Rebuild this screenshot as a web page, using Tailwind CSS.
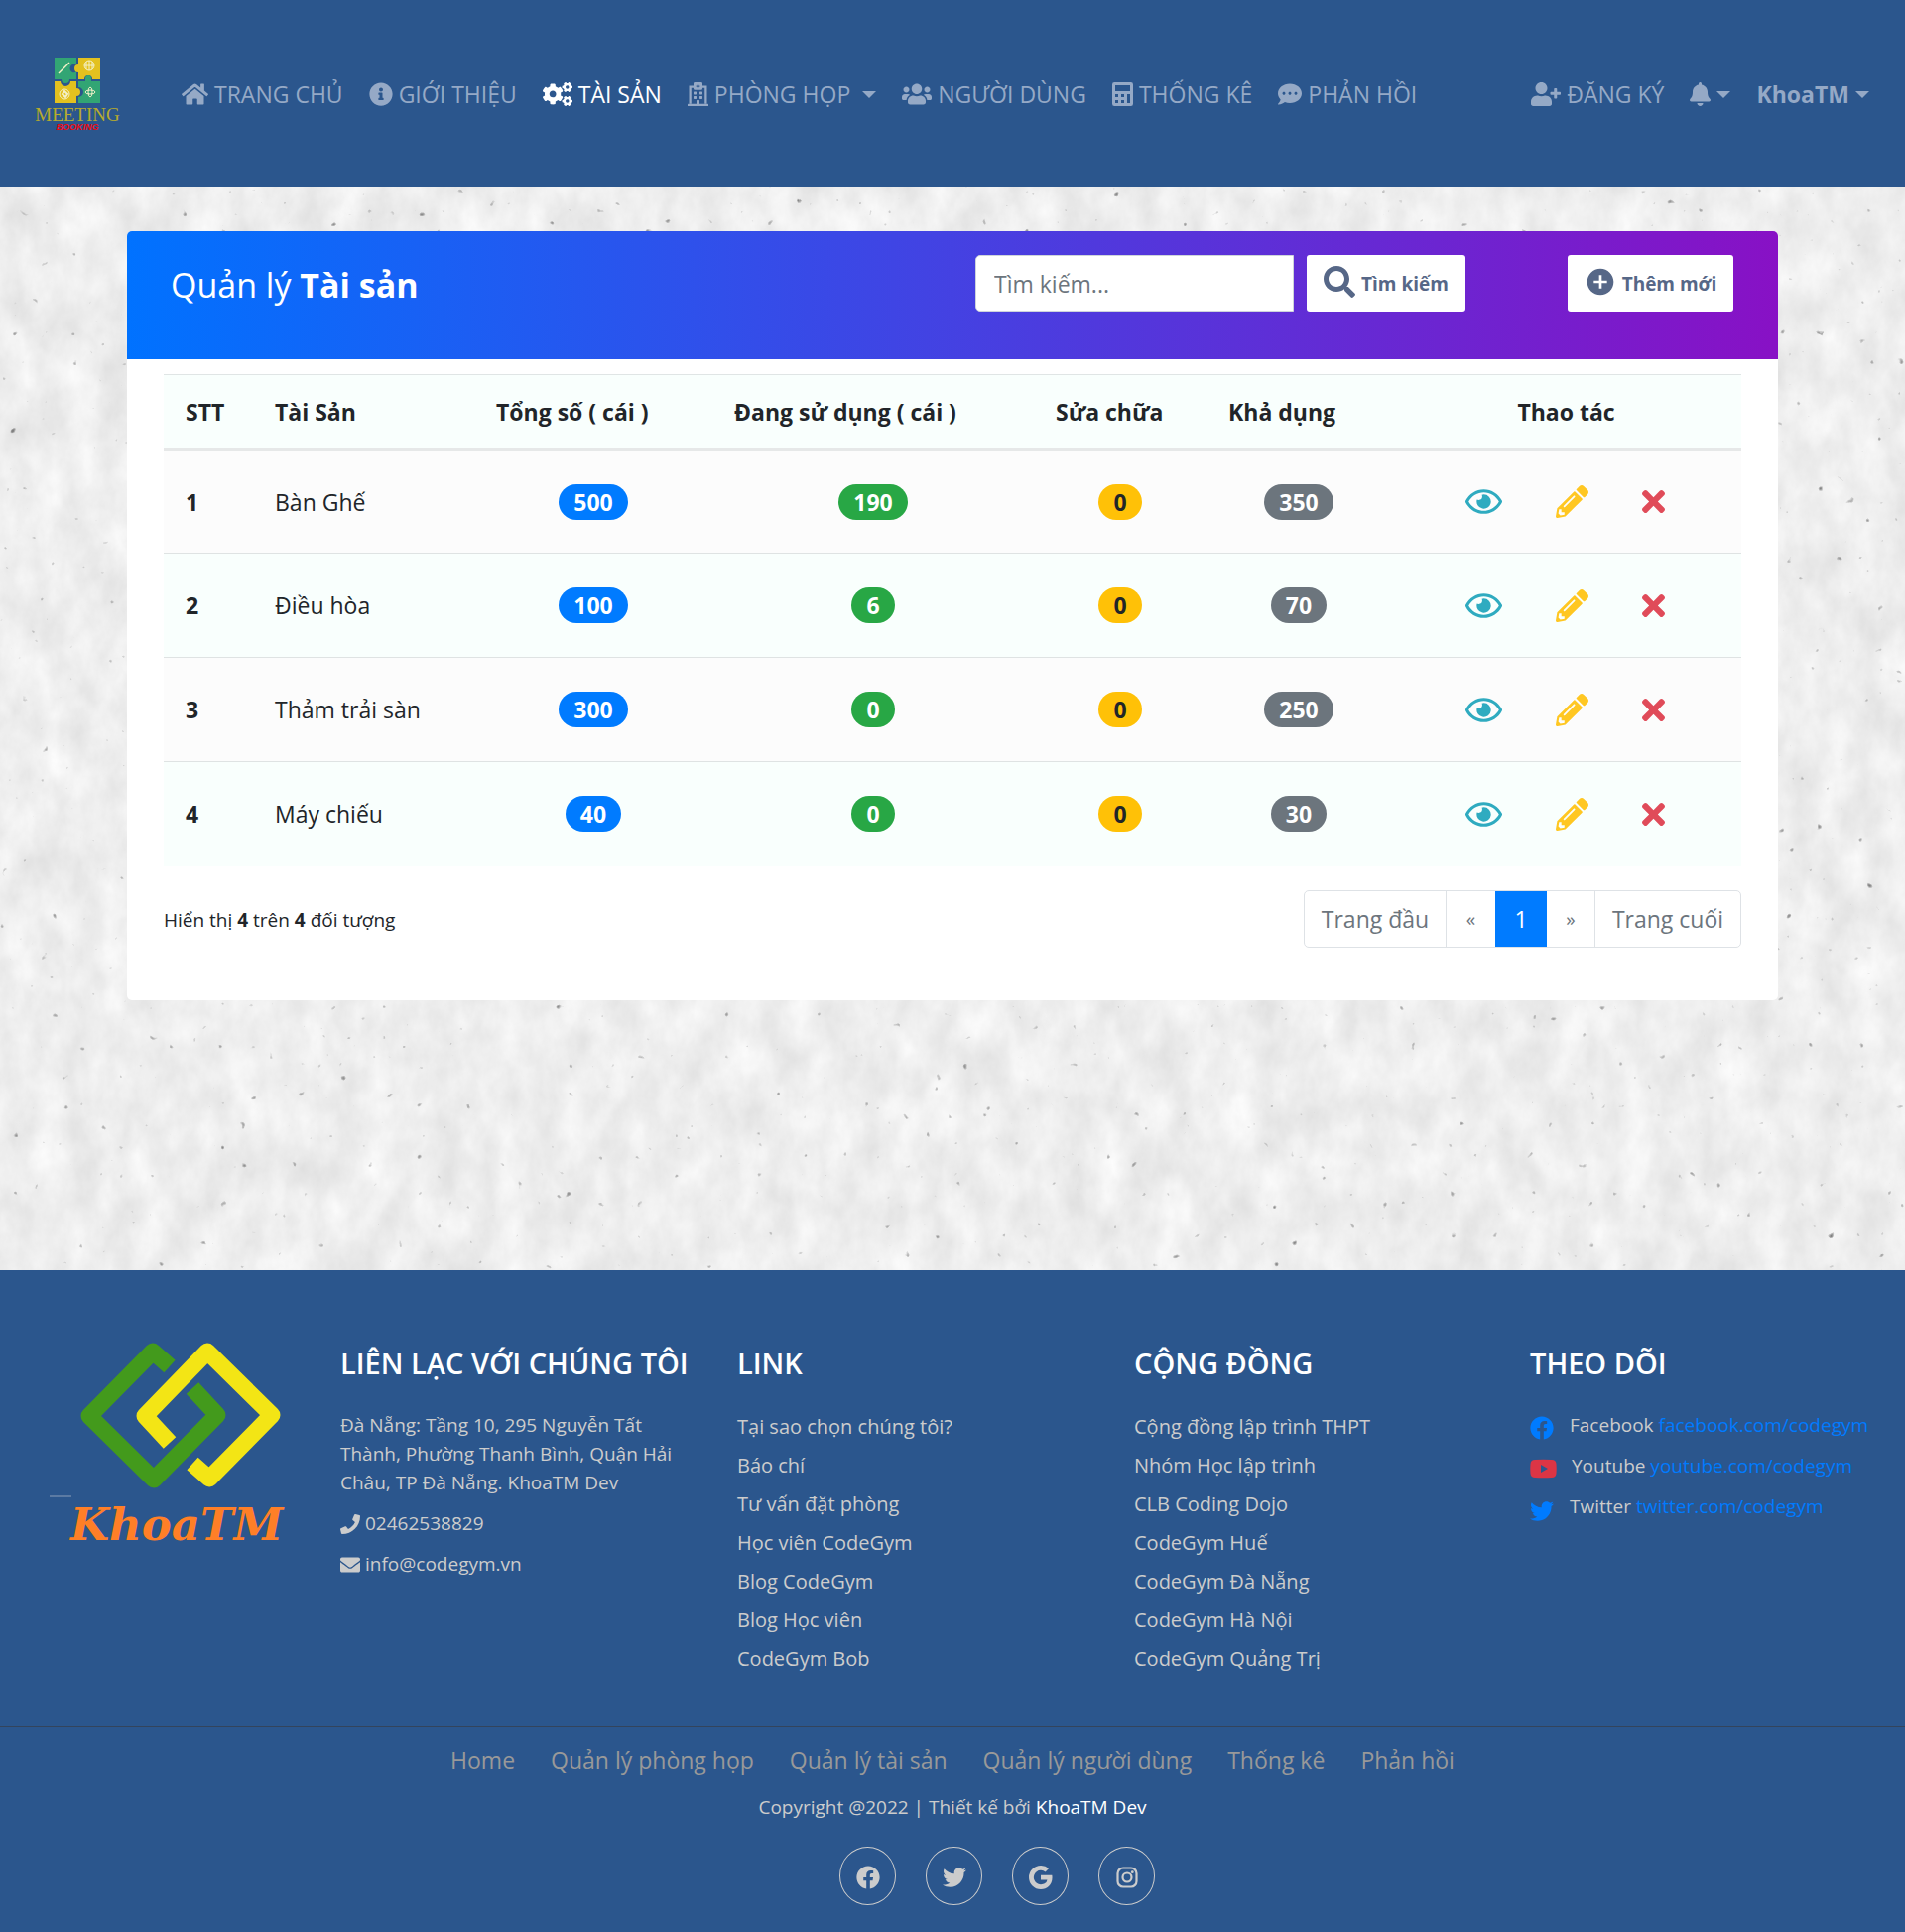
<!DOCTYPE html>
<html lang="vi">
<head>
<meta charset="utf-8">
<meta name="viewport" content="width=device-width, initial-scale=1">
<title>Quản lý Tài sản</title>
<script src="https://cdn.jsdelivr.net/npm/@tailwindcss/browser@4"></script>
</head>
<body class="relative min-h-screen flex flex-col bg-[#eeeeee] font-['Open_Sans','Noto_Sans',sans-serif] text-[23px] leading-[36px] text-[#212529]">

<svg class="hidden" aria-hidden="true">
  <symbol id="home" viewBox="0 0 576 512"><path d="M280.37 148.26L96 300.11V464a16 16 0 0 0 16 16l112.06-.29a16 16 0 0 0 15.92-16V368a16 16 0 0 1 16-16h64a16 16 0 0 1 16 16v95.64a16 16 0 0 0 16 16.05L464 480a16 16 0 0 0 16-16V300L295.67 148.26a12.19 12.19 0 0 0-15.3 0zM571.6 251.47L488 182.56V44.05a12 12 0 0 0-12-12h-56a12 12 0 0 0-12 12v72.61L318.47 43a48 48 0 0 0-61 0L4.34 251.47a12 12 0 0 0-1.6 16.9l25.5 31A12 12 0 0 0 45.15 301l235.22-193.74a12.19 12.19 0 0 1 15.3 0L530.9 301a12 12 0 0 0 16.9-1.6l25.5-31a12 12 0 0 0-1.7-16.93z"/></symbol>
  <symbol id="info" viewBox="0 0 512 512"><path d="M256 8C119.043 8 8 119.083 8 256c0 136.997 111.043 248 248 248s248-111.003 248-248C504 119.083 392.957 8 256 8zm0 110c23.196 0 42 18.804 42 42s-18.804 42-42 42-42-18.804-42-42 18.804-42 42-42zm56 254c0 6.627-5.373 12-12 12h-88c-6.627 0-12-5.373-12-12v-24c0-6.627 5.373-12 12-12h12v-64h-12c-6.627 0-12-5.373-12-12v-24c0-6.627 5.373-12 12-12h64c6.627 0 12 5.373 12 12v100h12c6.627 0 12 5.373 12 12v24z"/></symbol>
  <symbol id="cogs" viewBox="0 0 640 512">
    <path id="small-cog" d="M512.1 191l-8.2 14.3c-3 5.3-9.4 7.5-15.1 5.4-11.8-4.4-22.6-10.7-32.1-18.6-4.6-3.8-5.8-10.5-2.8-15.7l8.2-14.3c-6.9-8-12.3-17.3-15.9-27.4h-16.5c-6 0-11.2-4.3-12.2-10.3-2-12-2.1-24.6 0-37.1 1-6 6.2-10.4 12.2-10.4h16.5c3.6-10.1 9-19.4 15.9-27.4l-8.2-14.3c-3-5.2-1.9-11.9 2.8-15.7 9.5-7.9 20.4-14.2 32.1-18.6 5.7-2.1 12.1.1 15.1 5.4l8.2 14.3c10.5-1.9 21.2-1.9 31.7 0L552 6.3c3-5.3 9.4-7.5 15.1-5.4 11.8 4.4 22.6 10.7 32.1 18.6 4.6 3.8 5.8 10.5 2.8 15.7l-8.2 14.3c6.9 8 12.3 17.3 15.9 27.4h16.5c6 0 11.2 4.3 12.2 10.3 2 12 2.1 24.6 0 37.1-1 6-6.2 10.4-12.2 10.4h-16.5c-3.6 10.1-9 19.4-15.9 27.4l8.2 14.3c3 5.2 1.9 11.9-2.8 15.7-9.5 7.9-20.4 14.2-32.1 18.6-5.7 2.1-12.1-.1-15.1-5.4l-8.2-14.3c-10.4 1.9-21.2 1.9-31.7 0zm-10.5-58.8c38.5 29.6 82.4-14.3 52.8-52.8-38.5-29.7-82.4 14.3-52.8 52.8z"/>
    <use href="#small-cog" y="300"/>
    <path d="M386.3 286.1l33.7 16.8c10.1 5.8 14.5 18.1 10.5 29.1-8.9 24.2-26.4 46.4-42.6 65.8-7.4 8.9-20.2 11.1-30.3 5.3l-29.1-16.8c-16 13.7-34.6 24.6-54.9 31.7v33.6c0 11.6-8.3 21.6-19.7 23.6-24.6 4.2-50.4 4.4-75.9 0-11.5-2-20-11.9-20-23.6V418c-20.3-7.2-38.9-18-54.9-31.7L74 403c-10 5.8-22.9 3.6-30.3-5.3-16.2-19.4-33.3-41.6-42.2-65.7-4-10.9.4-23.2 10.5-29.1l33.3-16.8c-3.9-20.9-3.9-42.4 0-63.4L12 205.8c-10.1-5.8-14.6-18.1-10.5-29 8.9-24.2 26-46.4 42.2-65.8 7.4-8.9 20.2-11.1 30.3-5.3l29.1 16.8c16-13.7 34.6-24.6 54.9-31.7V57.1c0-11.5 8.2-21.5 19.6-23.5 24.6-4.2 50.5-4.4 76-.1 11.5 2 20 11.9 20 23.6v33.6c20.3 7.2 38.9 18 54.9 31.7l29.1-16.8c10-5.8 22.9-3.6 30.3 5.3 16.2 19.4 33.2 41.6 42.1 65.8 4 10.9.1 23.2-10 29.1l-33.7 16.8c3.9 21 3.9 42.5 0 63.5zm-117.6 21.1c59.2-77-28.7-164.9-105.7-105.7-59.2 77 28.7 164.9 105.7 105.7z"/>
  </symbol>
  <symbol id="hospital" viewBox="0 0 448 512">
    <path d="M56 464V100h72M392 464V100h-72" fill="none" stroke="currentColor" stroke-width="48"/>
    <path d="M0 476q0-12 12-12h424q12 0 12 12v36H0zM192 464v-70q0-10 10-10h44q10 0 10 10v70zM128 212q0-12 12-12h40q12 0 12 12v40q0 12-12 12h-40q-12 0-12-12zM256 212q0-12 12-12h40q12 0 12 12v40q0 12-12 12h-40q-12 0-12-12zM128 308q0-12 12-12h40q12 0 12 12v40q0 12-12 12h-40q-12 0-12-12zM256 308q0-12 12-12h40q12 0 12 12v40q0 12-12 12h-40q-12 0-12-12z"/>
    <path fill-rule="evenodd" d="M128 28q0-28 28-28h136q28 0 28 28v108q0 28-28 28H156q-28 0-28-28zM210 46v26h-26v28h26v26h28v-26h26V72h-26V46z"/>
  </symbol>
  <symbol id="users" viewBox="0 0 640 512"><path d="M96 224c35.3 0 64-28.7 64-64s-28.7-64-64-64-64 28.7-64 64 28.7 64 64 64zm448 0c35.3 0 64-28.7 64-64s-28.7-64-64-64-64 28.7-64 64 28.7 64 64 64zm32 32h-64c-17.6 0-33.5 7.1-45.1 18.6 40.3 22.1 68.9 62 75.1 109.4h66c17.7 0 32-14.3 32-32v-32c0-35.3-28.7-64-64-64zm-256 0c61.9 0 112-50.1 112-112S381.9 32 320 32 208 82.1 208 144s50.1 112 112 112zm76.8 32h-8.3c-20.8 10-43.9 16-68.5 16s-47.6-6-68.5-16h-8.3C179.6 288 128 339.6 128 403.2V432c0 26.5 21.5 48 48 48h288c26.5 0 48-21.5 48-48v-28.8c0-63.6-51.6-115.2-115.2-115.2zm-223.7-13.4C161.5 263.1 145.6 256 128 256H64c-35.3 0-64 28.7-64 64v32c0 17.7 14.3 32 32 32h65.9c6.3-47.4 34.9-87.3 75.2-109.4z"/></symbol>
  <symbol id="calculator" viewBox="0 0 448 512"><path fill-rule="evenodd" d="M48 0h352q48 0 48 48v416q0 48-48 48H48q-48 0-48-48V48Q0 0 48 0zM64 64v128h320V64zM64 256v64h64v-64zM192 256v64h64v-64zM320 256v192h64V256zM64 384v64h64v-64zM192 384v64h64v-64z"/></symbol>
  <symbol id="comment" viewBox="0 0 512 512"><path d="M256 32C114.6 32 0 125.1 0 240c0 49.6 21.4 95 57 130.7C44.5 421.1 2.7 466 2.2 466.5c-2.2 2.3-2.8 5.7-1.5 8.7S4.8 480 8 480c66.3 0 116-31.8 140.6-51.4 32.7 12.3 69 19.4 107.4 19.4 141.4 0 256-93.1 256-208S397.4 32 256 32zM128 272c-17.7 0-32-14.3-32-32s14.3-32 32-32 32 14.3 32 32-14.3 32-32 32zm128 0c-17.7 0-32-14.3-32-32s14.3-32 32-32 32 14.3 32 32-14.3 32-32 32zm128 0c-17.7 0-32-14.3-32-32s14.3-32 32-32 32 14.3 32 32-14.3 32-32 32z"/></symbol>
  <symbol id="user-plus" viewBox="0 0 640 512"><path d="M624 208h-64v-64c0-8.8-7.2-16-16-16h-32c-8.8 0-16 7.2-16 16v64h-64c-8.8 0-16 7.2-16 16v32c0 8.8 7.2 16 16 16h64v64c0 8.8 7.2 16 16 16h32c8.8 0 16-7.2 16-16v-64h64c8.8 0 16-7.2 16-16v-32c0-8.8-7.2-16-16-16zm-400 48c70.7 0 128-57.3 128-128S294.7 0 224 0 96 57.3 96 128s57.3 128 128 128zm89.6 32h-16.7c-22.2 10.2-46.9 16-72.9 16s-50.6-5.8-72.9-16h-16.7C60.2 288 0 348.2 0 422.4V464c0 26.5 21.5 48 48 48h352c26.5 0 48-21.5 48-48v-41.6c0-74.2-60.2-134.4-134.4-134.4z"/></symbol>
  <symbol id="bell" viewBox="0 0 448 512"><path d="M224 512c35.32 0 63.97-28.65 63.97-64H160.03c0 35.35 28.65 64 63.97 64zm215.39-149.71c-19.32-20.76-55.47-51.99-55.47-154.29 0-77.7-54.48-139.9-127.94-155.16V32c0-17.67-14.32-32-31.98-32s-31.98 14.33-31.98 32v20.84C118.56 68.1 64.08 130.3 64.08 208c0 102.3-36.15 133.53-55.47 154.29-6 6.45-8.66 14.16-8.61 21.71.11 16.4 12.98 32 32.1 32h383.8c19.12 0 32-15.6 32.1-32 .05-7.55-2.61-15.27-8.61-21.71z"/></symbol>
  <symbol id="caret" viewBox="0 0 14 7"><path d="M0 0h14L7 7z"/></symbol>
  <symbol id="search" viewBox="0 0 512 512"><path d="M505 442.7L405.3 343c-4.5-4.5-10.6-7-17-7H372c27.6-35.3 44-79.7 44-128C416 93.1 322.9 0 208 0S0 93.1 0 208s93.1 208 208 208c48.3 0 92.7-16.4 128-44v16.3c0 6.4 2.5 12.5 7 17l99.7 99.7c9.4 9.4 24.6 9.4 33.9 0l28.3-28.3c9.4-9.4 9.4-24.6.1-34zM208 336c-70.7 0-128-57.2-128-128 0-70.7 57.2-128 128-128 70.7 0 128 57.2 128 128 0 70.7-57.2 128-128 128z"/></symbol>
  <symbol id="add" viewBox="0 0 24 24"><path d="M12 2C6.48 2 2 6.48 2 12s4.48 10 10 10 10-4.48 10-10S17.52 2 12 2zm5 11h-4v4h-2v-4H7v-2h4V7h2v4h4v2z"/></symbol>
  <symbol id="eye" viewBox="0 0 576 512"><path d="M288 144a110.94 110.94 0 0 0-31.24 5 55.4 55.4 0 0 1 7.24 27 56 56 0 0 1-56 56 55.4 55.4 0 0 1-27-7.24A111.71 111.71 0 1 0 288 144zm284.52 97.4C518.29 135.59 410.93 64 288 64S57.68 135.64 3.48 241.41a32.35 32.35 0 0 0 0 29.19C57.71 376.41 165.07 448 288 448s230.32-71.64 284.52-177.41a32.35 32.35 0 0 0 0-29.19zM288 400c-98.65 0-189.09-55-237.93-144C98.91 167 189.34 112 288 112s189.09 55 237.93 144C477.1 345 386.66 400 288 400z"/></symbol>
  <symbol id="pencil" viewBox="0 0 512 512"><path d="M497.9 142.1l-46.1 46.1c-4.7 4.7-12.3 4.7-17 0l-111-111c-4.7-4.7-4.7-12.3 0-17l46.1-46.1c18.7-18.7 49.1-18.7 67.9 0l60.1 60.1c18.8 18.7 18.8 49.1 0 67.9zM284.2 99.8L21.6 362.4.4 483.9c-2.9 16.4 11.4 30.6 27.8 27.8l121.5-21.3 262.6-262.6c4.7-4.7 4.7-12.3 0-17l-111-111c-4.8-4.7-12.4-4.7-17.1 0zM124.1 339.9c-5.5-5.5-5.5-14.3 0-19.8l154-154c5.5-5.5 14.3-5.5 19.8 0s5.5 14.3 0 19.8l-154 154c-5.5 5.5-14.3 5.5-19.8 0zM88 424h48v36.3l-64.5 11.3-31.1-31.1L51.7 376H88v48z"/></symbol>
  <symbol id="times" viewBox="0 80 352 352"><path d="M242.72 256l100.07-100.07c12.28-12.28 12.28-32.19 0-44.48l-22.24-22.24c-12.28-12.28-32.19-12.28-44.48 0L176 189.28 75.93 89.21c-12.28-12.28-32.19-12.28-44.48 0L9.21 111.45c-12.28 12.28-12.28 32.19 0 44.48L109.28 256 9.21 356.07c-12.28 12.28-12.28 32.19 0 44.48l22.24 22.24c12.28 12.28 32.2 12.28 44.48 0L176 322.72l100.07 100.07c12.28 12.28 32.2 12.28 44.48 0l22.24-22.24c12.28-12.28 12.28-32.19 0-44.48L242.72 256z"/></symbol>
  <symbol id="phone" viewBox="0 0 512 512"><path d="M493.4 24.6l-104-24c-11.3-2.6-22.9 3.3-27.5 13.9l-48 112c-4.2 9.8-1.4 21.3 6.9 28l60.6 49.6c-36 76.7-98.9 140.5-177.2 177.2l-49.6-60.6c-6.8-8.3-18.2-11.1-28-6.9l-112 48C3.9 366.5-2 378.1.6 389.4l24 104C27.1 504.2 36.7 512 48 512c256.1 0 464-207.5 464-464 0-11.2-7.7-20.9-18.6-23.4z"/></symbol>
  <symbol id="envelope" viewBox="0 0 512 512"><path d="M502.3 190.8c3.9-3.1 9.7-.2 9.7 4.7V400c0 26.5-21.5 48-48 48H48c-26.5 0-48-21.5-48-48V195.6c0-5 5.7-7.8 9.7-4.7 22.4 17.4 52.1 39.5 154.1 113.6 21.1 15.4 56.7 47.8 92.2 47.6 35.7.3 72-32.8 92.3-47.6 102-74.1 131.6-96.3 154-113.7zM256 320c23.2.4 56.6-29.2 73.4-41.4 132.7-96.3 142.8-104.7 173.4-128.7 5.8-4.5 9.2-11.5 9.2-18.9v-19c0-26.5-21.5-48-48-48H48c-26.5 0-48 21.5-48 48v19c0 7.4 3.4 14.3 9.2 18.9 30.6 23.9 40.7 32.4 173.4 128.7 16.8 12.2 50.2 41.8 73.4 41.4z"/></symbol>
  <symbol id="facebook" viewBox="0 0 512 512"><path d="M504 256C504 119 393 8 256 8S8 119 8 256c0 123.78 90.69 226.38 209.25 245V327.69h-63V256h63v-54.64c0-62.15 37-96.48 93.67-96.48 27.14 0 55.52 4.84 55.52 4.84v61h-31.28c-30.8 0-40.41 19.12-40.41 38.73V256h68.78l-11 71.69h-57.78V501C413.31 482.38 504 379.78 504 256z"/></symbol>
  <symbol id="youtube" viewBox="0 0 27 24"><path fill-rule="evenodd" d="M5 3Q13.500 2.500 22 3q4 0 4.500 4 .5 5 0 10-.5 4-4.500 4Q13.500 21.500 5 21 1 21 .5 17 0 12 .5 7 1 3 5 3zM11 8v8l7-4z"/></symbol>
  <symbol id="twitter" viewBox="0 0 512 512"><path d="M459.37 151.716c.325 4.548.325 9.097.325 13.645 0 138.72-105.583 298.558-298.558 298.558-59.452 0-114.68-17.219-161.137-47.106 8.447.974 16.568 1.299 25.34 1.299 49.055 0 94.213-16.568 130.274-44.832-46.132-.975-84.792-31.188-98.112-72.772 6.498.974 12.995 1.624 19.818 1.624 9.421 0 18.843-1.3 27.614-3.573-48.081-9.747-84.143-51.98-84.143-102.985v-1.299c13.969 7.797 30.214 12.67 47.431 13.319-28.264-18.843-46.781-51.005-46.781-87.391 0-19.492 5.197-37.36 14.294-52.954 51.655 63.675 129.3 105.258 216.365 109.807-1.624-7.797-2.599-15.918-2.599-24.04 0-57.828 46.782-104.934 104.934-104.934 30.213 0 57.502 12.67 76.67 33.137 23.715-4.548 46.456-13.32 66.599-25.34-7.798 24.366-24.366 44.833-46.132 57.827 21.117-2.273 41.584-8.122 60.426-16.243-14.292 20.791-32.161 39.308-52.628 54.253z"/></symbol>
  <symbol id="google" viewBox="0 0 16 16"><path d="M15.545 6.558a9.42 9.42 0 0 1 .139 1.626c0 2.434-.87 4.492-2.384 5.885h.002C11.978 15.292 10.158 16 8 16A8 8 0 1 1 8 0a7.689 7.689 0 0 1 5.352 2.082l-2.284 2.284A4.347 4.347 0 0 0 8 3.166c-2.087 0-3.86 1.408-4.492 3.304a4.792 4.792 0 0 0 0 3.063h.003c.635 1.893 2.405 3.301 4.492 3.301 1.078 0 2.004-.276 2.722-.764h-.003a3.702 3.702 0 0 0 1.599-2.431H8v-3.08h7.545z"/></symbol>
  <symbol id="instagram" viewBox="0 0 24 24"><g fill="none" stroke="currentColor" stroke-width="2.200"><rect x="2.500" y="2.500" width="19" height="19" rx="5.500"/><circle cx="12" cy="12" r="4.500"/></g><circle cx="17.300" cy="6.700" r="1.400"/></symbol>
</svg>

<!-- plaster wall behind the page -->
<svg class="absolute inset-0 -z-10 h-full w-full" aria-hidden="true">
  <filter id="plaster" x="0" y="0" width="100%" height="100%" color-interpolation-filters="sRGB">
    <feTurbulence type="fractalNoise" baseFrequency="0.03 0.02" numOctaves="5" seed="4"/>
    <feColorMatrix values="0.13 0 0 0 0.868  0.13 0 0 0 0.868  0.13 0 0 0 0.868  0 0 0 0 1"/>
  </filter>
  <filter id="specks" x="0" y="0" width="100%" height="100%" color-interpolation-filters="sRGB">
    <feTurbulence type="fractalNoise" baseFrequency="0.1" numOctaves="2" seed="11"/>
    <feColorMatrix values="0 0 0 0 0.5  0 0 0 0 0.5  0 0 0 0 0.5  7 0 0 0 -5.45"/>
  </filter>
  <rect width="100%" height="100%" filter="url(#plaster)"/>
  <rect width="100%" height="100%" filter="url(#specks)"/>
</svg>

<nav class="flex h-[188px] items-center bg-[#2b568d] pl-[34px] pr-9 pt-[2px] text-[#95a9c6]">
  <a href="#" class="mr-[61px] flex w-[88px] flex-col items-center">
    <svg class="h-[46px] w-[46px]" viewBox="0 0 46 46" aria-hidden="true">
      <path fill="#32a574" d="M0 0h22v7a4 4 0 0 0-4 8 4 4 0 0 0 4-1v8h-7a4 4 0 0 1-8 0H0z"/>
      <path fill="#e3c11f" d="M24 0h22v22h-8a4 4 0 0 0-8 0h-6v-7a4 4 0 1 1 0-8z"/>
      <path fill="#e3c11f" d="M0 24h6a5 5 0 0 0 10 0h6v7a4 4 0 1 1 0 8v7H0z"/>
      <path fill="#32a574" d="M24 24h7v-3a3 3 0 1 1 6 0v3h9v22H24v-6a5 5 0 0 0 0-10z"/>
      <g fill="none" stroke="#f4f1c9"><path stroke-width="1.500" d="M4 16L15 5"/><circle cx="35" cy="8" r="5"/><path d="M30 8h10M35 3v10M32 4v8M38 4v8"/><circle cx="10" cy="37" r="5"/><path stroke-width="2" d="M8 37l2-3 3 3-2 3z"/><ellipse cx="36" cy="35" rx="5" ry="2"/><ellipse cx="36" cy="35" rx="2" ry="5"/></g>
    </svg>
    <span class="mt-1 font-['Liberation_Serif',serif] text-[19px] leading-[16px] text-[#b7ab2c]">MEETING</span>
    <span class="font-['Liberation_Sans',sans-serif] text-[9px] font-bold italic leading-[8px] text-[#f00810]">BOOKING</span>
  </a>
  <ul class="flex flex-1 items-center gap-[26px] whitespace-nowrap">
    <li><a href="#" class="flex items-center gap-[6px]"><svg class="h-6 w-[27px] fill-current"><use href="#home"/></svg>TRANG CHỦ</a></li>
    <li><a href="#" class="flex items-center gap-[6px]"><svg class="size-6 fill-current"><use href="#info"/></svg>GIỚI THIỆU</a></li>
    <li><a href="#" class="flex items-center gap-[6px] text-white"><svg class="h-6 w-[30px] fill-current"><use href="#cogs"/></svg>TÀI SẢN</a></li>
    <li><a href="#" class="flex items-center gap-[6px]"><svg class="h-6 w-[21px] fill-current"><use href="#hospital"/></svg>PHÒNG HỌP<svg class="ml-[6px] h-[7px] w-[14px] fill-current"><use href="#caret"/></svg></a></li>
    <li><a href="#" class="flex items-center gap-[6px]"><svg class="h-6 w-[30px] fill-current"><use href="#users"/></svg>NGƯỜI DÙNG</a></li>
    <li><a href="#" class="flex items-center gap-[6px]"><svg class="h-6 w-[21px] fill-current"><use href="#calculator"/></svg>THỐNG KÊ</a></li>
    <li><a href="#" class="flex items-center gap-[6px]"><svg class="size-6 fill-current"><use href="#comment"/></svg>PHẢN HỒI</a></li>
  </ul>
  <ul class="flex items-center gap-[26px] whitespace-nowrap">
    <li><a href="#" class="flex items-center gap-[6px]"><svg class="h-6 w-[30px] fill-current"><use href="#user-plus"/></svg>ĐĂNG KÝ</a></li>
    <li><a href="#" aria-label="Thông báo" class="flex items-center gap-[6px]"><svg class="h-6 w-[21px] fill-current"><use href="#bell"/></svg><svg class="h-[7px] w-[14px] fill-current"><use href="#caret"/></svg></a></li>
    <li><a href="#" class="flex items-center gap-[6px] font-bold">KhoaTM<svg class="h-[7px] w-[14px] fill-current"><use href="#caret"/></svg></a></li>
  </ul>
</nav>

<main class="flex-1 px-32 pt-[45px] pb-[272px]">
  <section class="rounded-[5px] bg-white pb-[53px]">
    <header class="flex h-[129px] items-start rounded-t-[5px] bg-linear-to-r/srgb from-[#0072ff] to-[#8811c5] pl-11 pr-[45px] pt-6">
      <h2 class="flex-1 text-[34px] font-medium leading-[60px] text-white">Quản lý <b>Tài sản</b></h2>
      <form class="flex gap-[13px]">
        <input type="text" aria-label="Tìm kiếm" placeholder="Tìm kiếm..." class="h-[57px] w-[321px] rounded-l-[5px] border border-[#ced4da] bg-white px-[18px] text-[23px] placeholder:text-[#6c757d]">
        <button type="button" class="flex h-[57px] w-[160px] items-center justify-center gap-[6px] rounded-[3px] bg-white text-[19px] font-bold text-[#566787]"><svg class="mb-1 size-8 fill-current"><use href="#search"/></svg>Tìm kiếm</button>
      </form>
      <button type="button" class="ml-[103px] flex h-[57px] w-[167px] items-center justify-center gap-[6px] rounded-[3px] bg-white text-[19px] font-bold text-[#566787]"><svg class="mb-1 size-8 fill-current"><use href="#add"/></svg>Thêm mới</button>
    </header>

    <div class="px-[37px] pt-[15px]">
      <table class="w-full table-fixed border-collapse text-center">
        <colgroup><col class="w-[90px]"><col class="w-[223px]"><col class="w-[240px]"><col class="w-[324px]"><col class="w-[174px]"><col class="w-[186px]"><col></colgroup>
        <thead>
          <tr class="h-[75px] border-t border-b-3 border-t-[#e0e5e5] border-b-[#e6e8e8] bg-[#f9fffd] text-left font-bold">
            <th scope="col" class="pl-[22px]">STT</th><th scope="col" class="pl-[22px]">Tài Sản</th><th scope="col" class="pl-[22px]">Tổng số ( cái )</th><th scope="col" class="pl-[22px]">Đang sử dụng ( cái )</th><th scope="col" class="pl-[22px]">Sửa chữa</th><th scope="col" class="pl-[22px]">Khả dụng</th><th scope="col" class="text-center">Thao tác</th>
          </tr>
        </thead>
        <tbody id="rows"></tbody>
      </table>
      <div class="mt-6 flex items-center justify-between">
        <p class="pt-[2px] text-[19px]">Hiển thị <b>4</b> trên <b>4</b> đối tượng</p>
        <ul class="flex h-[58px] overflow-hidden rounded-[5px] border border-[#dee2e6] text-[#6c757d]">
          <li><a href="#" class="flex h-full w-[142px] items-center justify-center">Trang đầu</a></li>
          <li><a href="#" class="flex h-full w-[50px] items-center justify-center border-l border-[#dee2e6] text-[19px]">«</a></li>
          <li class="-my-px"><a href="#" aria-current="page" class="flex h-[58px] w-[52px] items-center justify-center bg-[#007bff] text-white">1</a></li>
          <li><a href="#" class="flex h-full w-[48px] items-center justify-center text-[19px]">»</a></li>
          <li><a href="#" class="flex h-full w-[147px] items-center justify-center border-l border-[#dee2e6]">Trang cuối</a></li>
        </ul>
      </div>
    </div>
  </section>
</main>

<footer class="bg-[#2b568d] text-[#cccccc]">
  <div class="grid h-[459px] grid-cols-[4fr_5fr_5fr_5fr_5fr] pt-[70px]">
    <div class="pl-[50px]">
      <svg class="h-[157px] w-[245px]" viewBox="50 1350 245 157" fill="none" stroke-width="17" stroke-linejoin="round" aria-hidden="true">
        <path stroke="#439a1c" d="M171 1377L154 1362 90 1427 155 1491 219 1426 194 1399"/>
        <path stroke="#f3e515" d="M171 1454L146 1427 209 1362 274 1426 211 1490 194 1475"/>
      </svg>
      <hr class="w-[22px] border-t-2 border-[#5b7aa3]">
      <p class="ml-[21px] mt-[2px] whitespace-nowrap font-['DejaVu_Serif',serif] text-[45px] font-bold italic leading-[52px] text-[#ff7f27]">KhoaTM</p>
    </div>
    <div class="px-[23px]">
      <h3 class="whitespace-nowrap text-[29px] font-semibold leading-[48px] text-white">LIÊN LẠC VỚI CHÚNG TÔI</h3>
      <p class="mt-6 text-[19px] leading-[29px]">Đà Nẵng: Tầng 10, 295 Nguyễn Tất Thành, Phường Thanh Bình, Quận Hải Châu, TP Đà Nẵng. KhoaTM Dev</p>
      <p class="mt-3 flex items-center gap-[5px] text-[19px] leading-[29px]"><svg class="size-5 fill-current"><use href="#phone"/></svg>02462538829</p>
      <p class="mt-3 flex items-center gap-[5px] text-[19px] leading-[29px]"><svg class="size-5 fill-current"><use href="#envelope"/></svg>info@codegym.vn</p>
    </div>
    <div class="px-[23px]">
      <h3 class="text-[29px] font-semibold leading-[48px] text-white">LINK</h3>
      <ul class="mt-5 text-[20px] leading-[39px]">
        <li><a href="#">Tại sao chọn chúng tôi?</a></li><li><a href="#">Báo chí</a></li><li><a href="#">Tư vấn đặt phòng</a></li><li><a href="#">Học viên CodeGym</a></li><li><a href="#">Blog CodeGym</a></li><li><a href="#">Blog Học viên</a></li><li><a href="#">CodeGym Bob</a></li>
      </ul>
    </div>
    <div class="px-[23px]">
      <h3 class="text-[29px] font-semibold leading-[48px] text-white">CỘNG ĐỒNG</h3>
      <ul class="mt-5 text-[20px] leading-[39px]">
        <li><a href="#">Cộng đồng lập trình THPT</a></li><li><a href="#">Nhóm Học lập trình</a></li><li><a href="#">CLB Coding Dojo</a></li><li><a href="#">CodeGym Huế</a></li><li><a href="#">CodeGym Đà Nẵng</a></li><li><a href="#">CodeGym Hà Nội</a></li><li><a href="#">CodeGym Quảng Trị</a></li>
      </ul>
    </div>
    <div class="pl-[22px]">
      <h3 class="text-[29px] font-semibold leading-[48px] text-white">THEO DÕI</h3>
      <ul class="mt-[18px] whitespace-nowrap text-[19px] leading-[41px] text-[#cccccc]">
        <li class="flex items-center"><svg class="mr-4 mt-1 size-6 fill-[#007bff]"><use href="#facebook"/></svg><span>Facebook <a href="#" class="text-[#007bff]">facebook.com/codegym</a></span></li>
        <li class="flex items-center"><svg class="mr-[15px] mt-1 h-6 w-[27px] fill-[#dc3545]"><use href="#youtube"/></svg><span>Youtube <a href="#" class="text-[#007bff]">youtube.com/codegym</a></span></li>
        <li class="flex items-center"><svg class="mr-4 mt-2 size-6 fill-[#007bff]"><use href="#twitter"/></svg><span>Twitter <a href="#" class="text-[#007bff]">twitter.com/codegym</a></span></li>
      </ul>
    </div>
  </div>
  <div class="flex flex-col items-center border-t border-[#33445c] pt-4 pb-[27px]">
    <ul class="flex gap-9 text-[#999999]">
      <li><a href="#">Home</a></li><li><a href="#">Quản lý phòng họp</a></li><li><a href="#">Quản lý tài sản</a></li><li><a href="#">Quản lý người dùng</a></li><li><a href="#">Thống kê</a></li><li><a href="#">Phản hồi</a></li>
    </ul>
    <p class="mt-[13px] text-[19px] leading-[32px]">Copyright @2022 | Thiết kế bởi <a href="#" class="text-white">KhoaTM Dev</a></p>
    <ul class="mt-6 flex gap-[30px] pl-[90px]">
      <li><a href="#" aria-label="Facebook" class="flex h-[59px] w-[57px] items-center justify-center rounded-[50%] border border-[#cccccc]"><svg class="mt-[2px] size-6 fill-current"><use href="#facebook"/></svg></a></li>
      <li><a href="#" aria-label="Twitter" class="flex h-[59px] w-[57px] items-center justify-center rounded-[50%] border border-[#cccccc]"><svg class="mt-[2px] size-6 fill-current"><use href="#twitter"/></svg></a></li>
      <li><a href="#" aria-label="Google" class="flex h-[59px] w-[57px] items-center justify-center rounded-[50%] border border-[#cccccc]"><svg class="mt-[2px] size-6 fill-current"><use href="#google"/></svg></a></li>
      <li><a href="#" aria-label="Instagram" class="flex h-[59px] w-[57px] items-center justify-center rounded-[50%] border border-[#cccccc]"><svg class="mt-[2px] size-6 fill-current"><use href="#instagram"/></svg></a></li>
    </ul>
  </div>
</footer>

<script>
  const assets = [
    ['Bàn Ghế', 500, 190, 0, 350],
    ['Điều hòa', 100, 6, 0, 70],
    ['Thảm trải sàn', 300, 0, 0, 250],
    ['Máy chiếu', 40, 0, 0, 30],
  ];
  const colors = ['bg-[#007bff] text-white', 'bg-[#28a745] text-white', 'bg-[#ffc107] text-[#212529]', 'bg-[#6c757d] text-white'];
  document.getElementById('rows').innerHTML = assets.map(([name, ...counts], i) => `
    <tr class="h-[105px] border-b border-[#dfe3e3] last:border-b-0 odd:bg-[#fcfcfc] even:bg-[#f9fffd]">
      <th scope="row" class="pl-[22px] text-left font-bold">${i + 1}</th>
      <td class="pl-[22px] text-left">${name}</td>
      ${counts.map((n, c) => `<td><span class="inline-block h-9 rounded-full px-[15px] font-bold ${colors[c]}">${n}</span></td>`).join('')}
      <td>
        <div class="flex items-center justify-center gap-[54px] pr-[2px]">
          <a href="#" aria-label="Xem" class="text-[#2fabc0]"><svg class="h-[33px] w-[37px] fill-current"><use href="#eye"/></svg></a>
          <a href="#" aria-label="Sửa" class="text-[#ffc722]"><svg class="size-[33px] fill-current"><use href="#pencil"/></svg></a>
          <a href="#" aria-label="Xóa" class="text-[#e04b59]"><svg class="size-[23px] fill-current"><use href="#times"/></svg></a>
        </div>
      </td>
    </tr>`).join('');
</script>
</body>
</html>
